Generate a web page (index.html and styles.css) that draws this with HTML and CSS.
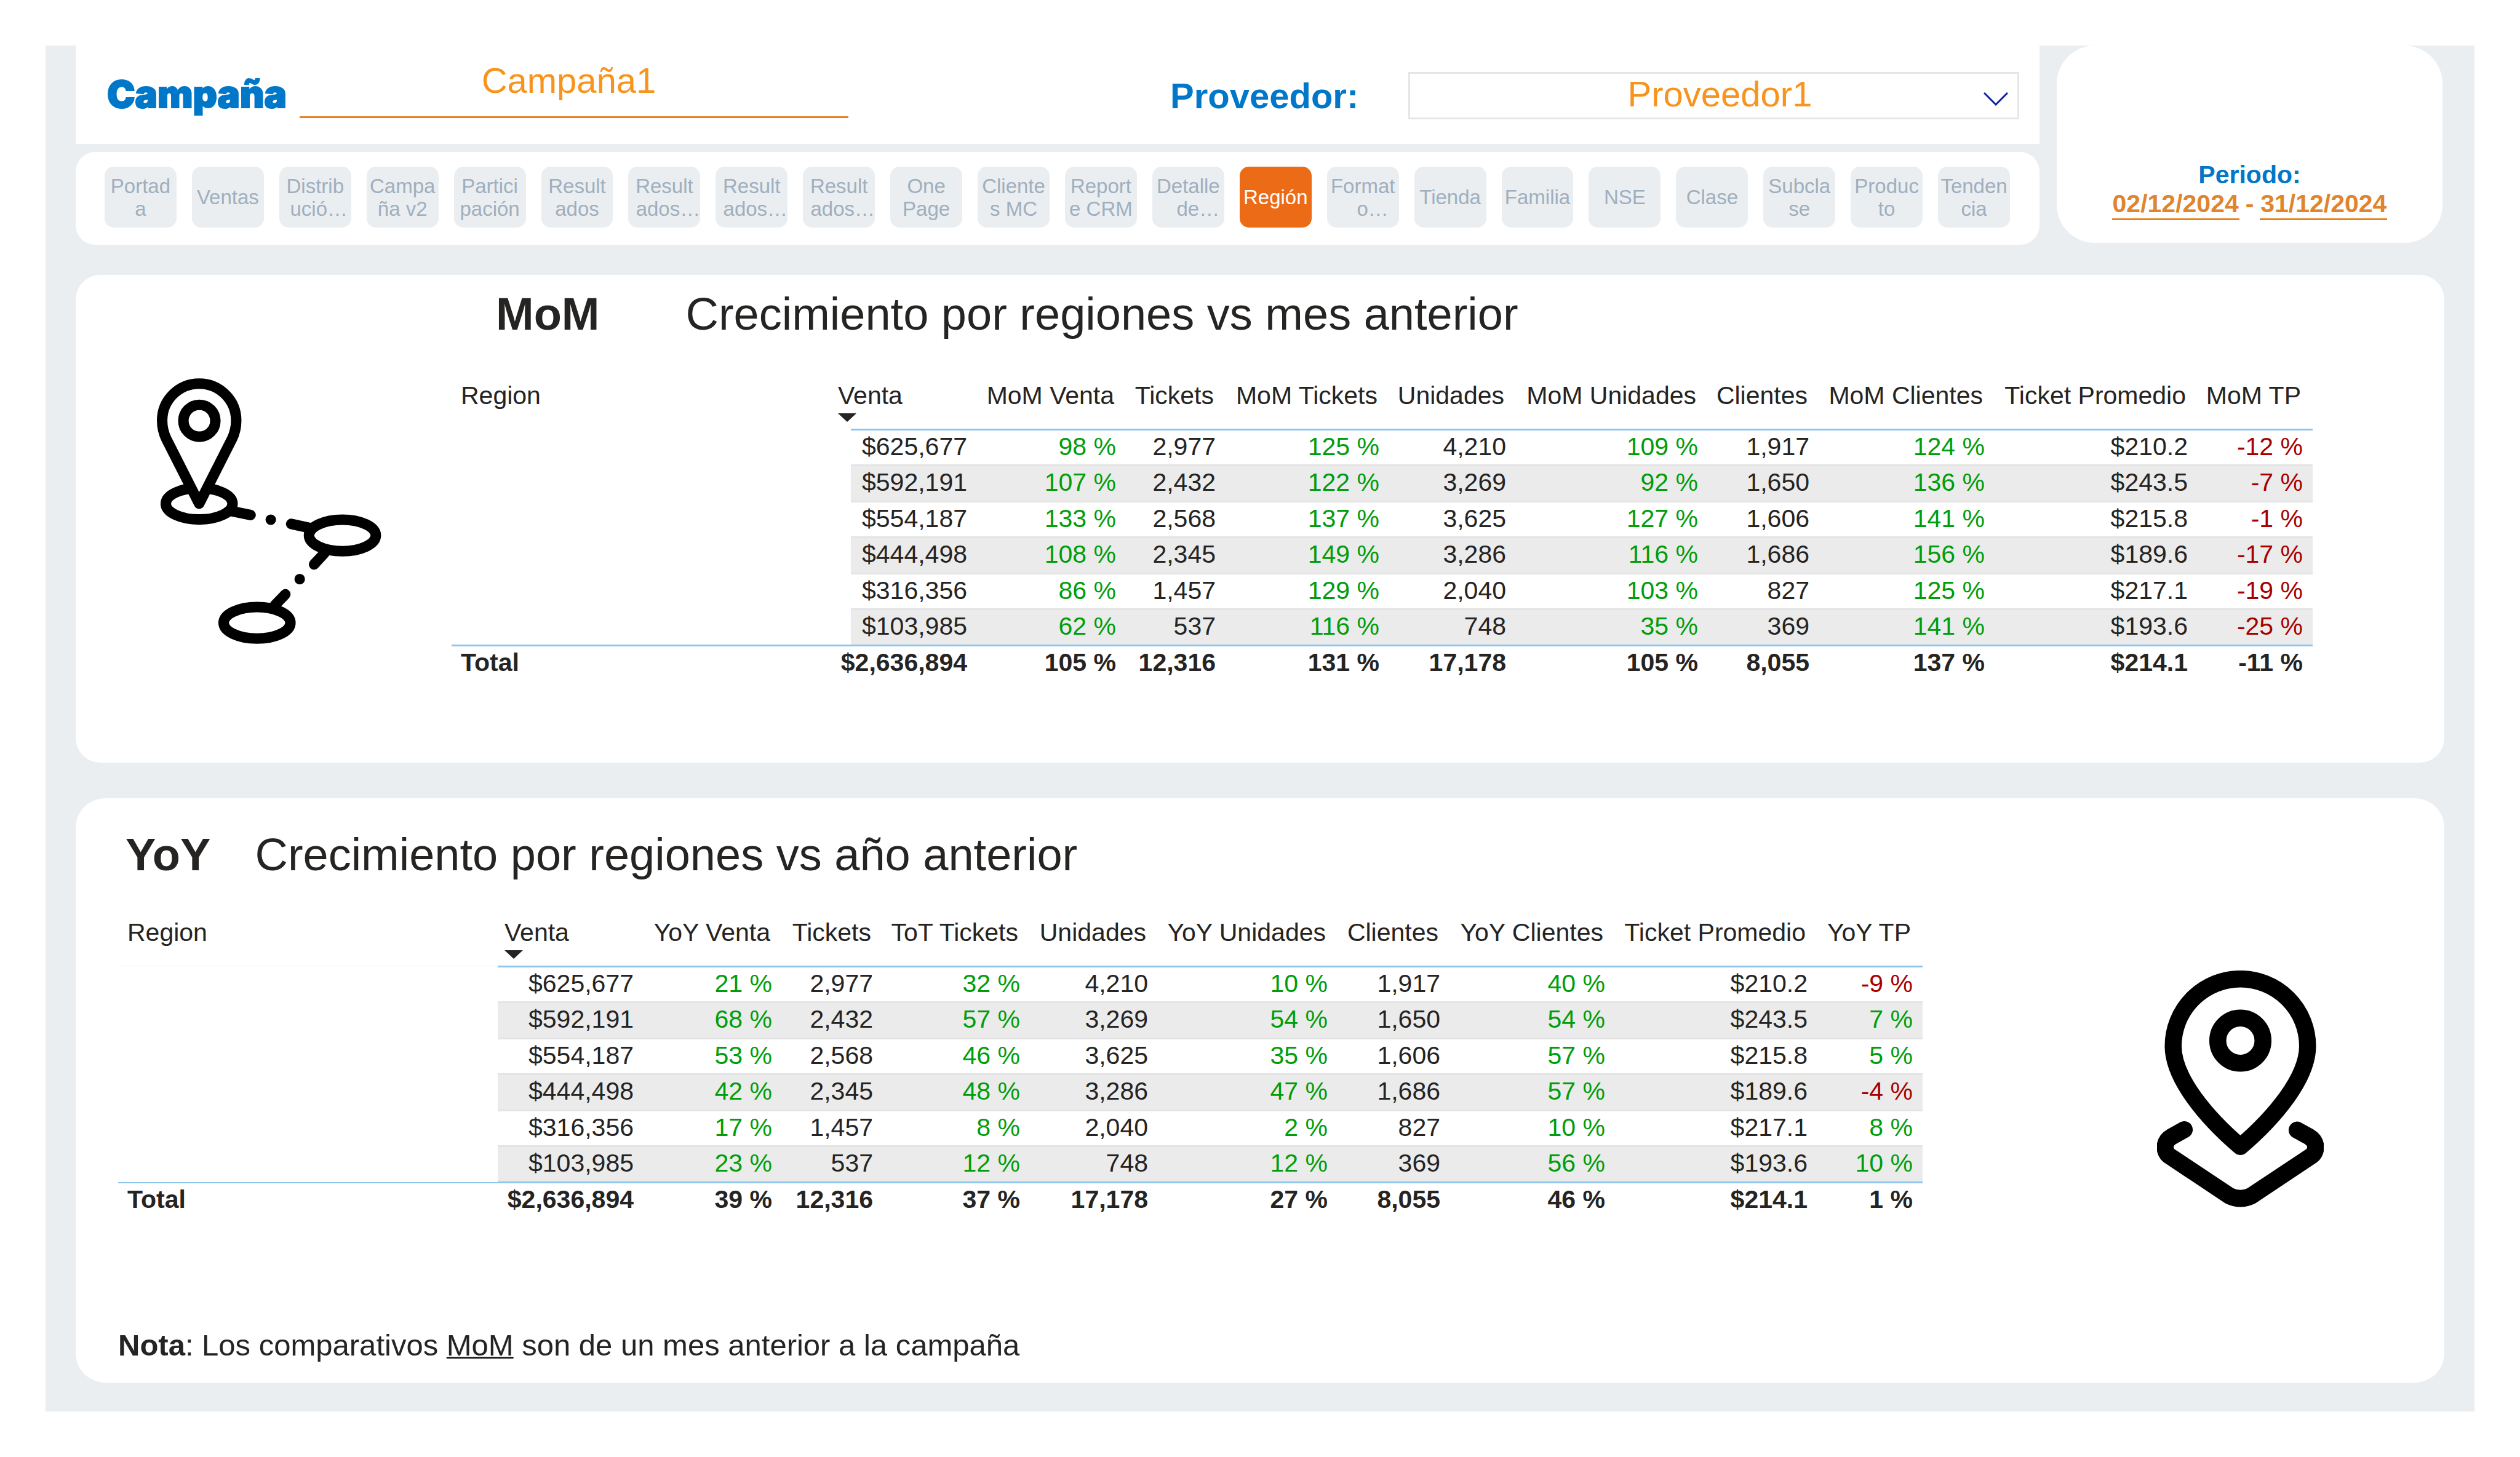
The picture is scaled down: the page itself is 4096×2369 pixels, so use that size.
FILE: index.html
```html
<!DOCTYPE html>
<html lang="es">
<head>
<meta charset="utf-8">
<title>Región</title>
<link rel="stylesheet" href="styles.css">
</head>
<body>
<main class="report">
  <div class="top">
    <div class="top-main">
      <header class="filters">
        <label class="filter-label filter-label-heavy" for="campana">Campaña</label>
        <input class="campaign" id="campana" type="text" value="Campaña1">
        <label class="filter-label provider-label" for="proveedor">Proveedor:</label>
        <div class="provider">
          <select class="provider-select" id="proveedor"><option>Proveedor1</option></select>
          <svg class="chevron" viewBox="0 0 40 22" aria-hidden="true"><path d="M1 1 L20 20 L39 1"/></svg>
        </div>
      </header>
      <nav class="pages">
        <button class="page">Portad<br>a</button>
        <button class="page">Ventas</button>
        <button class="page">Distrib<br><span class="clip">ució…</span></button>
        <button class="page">Campa<br>ña v2</button>
        <button class="page">Partici<br>pación</button>
        <button class="page">Result<br>ados</button>
        <button class="page">Result<br><span class="clip">ados…</span></button>
        <button class="page">Result<br><span class="clip">ados…</span></button>
        <button class="page">Result<br><span class="clip">ados…</span></button>
        <button class="page">One<br>Page</button>
        <button class="page">Cliente<br>s MC</button>
        <button class="page">Report<br>e CRM</button>
        <button class="page">Detalle<br><span class="clip-wide">de…</span></button>
        <button class="page page-active">Región</button>
        <button class="page">Format<br><span class="clip-wide">o…</span></button>
        <button class="page">Tienda</button>
        <button class="page">Familia</button>
        <button class="page">NSE</button>
        <button class="page">Clase</button>
        <button class="page">Subcla<br>se</button>
        <button class="page">Produc<br>to</button>
        <button class="page">Tenden<br>cia</button>
      </nav>
    </div>
    <section class="period">
      <label class="period-label" for="desde">Periodo:</label>
      <div class="period-dates">
        <input class="date" id="desde" type="text" value="02/12/2024">
        <span>-</span>
        <input class="date" type="text" value="31/12/2024" aria-label="Hasta">
      </div>
    </section>
  </div>

  <section class="card card-mom">
    <div class="route-area">
      <svg class="route" viewBox="175 125 1110 1316" aria-hidden="true">
        <g fill="none" stroke="#000" stroke-width="52" stroke-linecap="round" stroke-linejoin="round">
          <ellipse cx="384" cy="748" rx="165" ry="78"/>
          <path fill="#fff" d="M384 748 L222 428 C208 400 201 370 201 337 A183 183 0 0 1 567 337 C567 370 560 400 546 428 Z"/>
          <circle cx="385" cy="338" r="79"/>
          <path d="M545 785 L638 804 M839 848 L930 868 M1003 993 L952 1048 M810 1196 L758 1250"/>
          <ellipse cx="1092" cy="905" rx="165" ry="78"/>
          <ellipse cx="670" cy="1337" rx="165" ry="78"/>
        </g>
        <circle cx="738" cy="827" r="26"/>
        <circle cx="881" cy="1121" r="26"/>
      </svg>
    </div>
    <div class="mom-main">
      <h2 class="title title-mom"><strong>MoM</strong><span>Crecimiento por regiones vs mes anterior</span></h2>
      <table class="data">
        <colgroup>
          <col style="width:617px"><col style="width:32px"><col style="width:205px"><col style="width:242px"><col style="width:162px"><col style="width:266px"><col style="width:206px"><col style="width:312px"><col style="width:181px"><col style="width:285px"><col style="width:330px"><col style="width:187px">
        </colgroup>
        <thead>
          <tr><th class="left">Region</th><th class="left sorted" colspan="2">Venta<svg class="sort" viewBox="0 0 30 14" aria-hidden="true"><path d="M0 0H30L15 14Z"/></svg></th><th>MoM Venta</th><th>Tickets</th><th>MoM Tickets</th><th>Unidades</th><th>MoM Unidades</th><th>Clientes</th><th>MoM Clientes</th><th>Ticket Promedio</th><th>MoM TP</th></tr>
        </thead>
        <tbody>
          <tr><td class="region" colspan="2"></td><td>$625,677</td><td class="up">98 %</td><td>2,977</td><td class="up">125 %</td><td>4,210</td><td class="up">109 %</td><td>1,917</td><td class="up">124 %</td><td>$210.2</td><td class="down">-12 %</td></tr>
          <tr><td class="region" colspan="2"></td><td>$592,191</td><td class="up">107 %</td><td>2,432</td><td class="up">122 %</td><td>3,269</td><td class="up">92 %</td><td>1,650</td><td class="up">136 %</td><td>$243.5</td><td class="down">-7 %</td></tr>
          <tr><td class="region" colspan="2"></td><td>$554,187</td><td class="up">133 %</td><td>2,568</td><td class="up">137 %</td><td>3,625</td><td class="up">127 %</td><td>1,606</td><td class="up">141 %</td><td>$215.8</td><td class="down">-1 %</td></tr>
          <tr><td class="region" colspan="2"></td><td>$444,498</td><td class="up">108 %</td><td>2,345</td><td class="up">149 %</td><td>3,286</td><td class="up">116 %</td><td>1,686</td><td class="up">156 %</td><td>$189.6</td><td class="down">-17 %</td></tr>
          <tr><td class="region" colspan="2"></td><td>$316,356</td><td class="up">86 %</td><td>1,457</td><td class="up">129 %</td><td>2,040</td><td class="up">103 %</td><td>827</td><td class="up">125 %</td><td>$217.1</td><td class="down">-19 %</td></tr>
          <tr><td class="region" colspan="2"></td><td>$103,985</td><td class="up">62 %</td><td>537</td><td class="up">116 %</td><td>748</td><td class="up">35 %</td><td>369</td><td class="up">141 %</td><td>$193.6</td><td class="down">-25 %</td></tr>
        </tbody>
        <tfoot>
          <tr><th class="left">Total</th><td colspan="2">$2,636,894</td><td>105 %</td><td>12,316</td><td>131 %</td><td>17,178</td><td>105 %</td><td>8,055</td><td>137 %</td><td>$214.1</td><td>-11 %</td></tr>
        </tfoot>
      </table>
    </div>
  </section>

  <section class="card card-yoy">
    <div class="yoy-main">
      <h2 class="title title-yoy"><strong>YoY</strong><span>Crecimiento por regiones vs año anterior</span></h2>
      <table class="data">
        <colgroup>
          <col style="width:617px"><col style="width:237px"><col style="width:225px"><col style="width:164px"><col style="width:239px"><col style="width:208px"><col style="width:292px"><col style="width:183px"><col style="width:268px"><col style="width:329px"><col style="width:171px">
        </colgroup>
        <thead>
          <tr><th class="left">Region</th><th class="left sorted">Venta<svg class="sort" viewBox="0 0 30 14" aria-hidden="true"><path d="M0 0H30L15 14Z"/></svg></th><th>YoY Venta</th><th>Tickets</th><th>ToT Tickets</th><th>Unidades</th><th>YoY Unidades</th><th>Clientes</th><th>YoY Clientes</th><th>Ticket Promedio</th><th>YoY TP</th></tr>
        </thead>
        <tbody>
          <tr><td class="region"></td><td>$625,677</td><td class="up">21 %</td><td>2,977</td><td class="up">32 %</td><td>4,210</td><td class="up">10 %</td><td>1,917</td><td class="up">40 %</td><td>$210.2</td><td class="down">-9 %</td></tr>
          <tr><td class="region"></td><td>$592,191</td><td class="up">68 %</td><td>2,432</td><td class="up">57 %</td><td>3,269</td><td class="up">54 %</td><td>1,650</td><td class="up">54 %</td><td>$243.5</td><td class="up">7 %</td></tr>
          <tr><td class="region"></td><td>$554,187</td><td class="up">53 %</td><td>2,568</td><td class="up">46 %</td><td>3,625</td><td class="up">35 %</td><td>1,606</td><td class="up">57 %</td><td>$215.8</td><td class="up">5 %</td></tr>
          <tr><td class="region"></td><td>$444,498</td><td class="up">42 %</td><td>2,345</td><td class="up">48 %</td><td>3,286</td><td class="up">47 %</td><td>1,686</td><td class="up">57 %</td><td>$189.6</td><td class="down">-4 %</td></tr>
          <tr><td class="region"></td><td>$316,356</td><td class="up">17 %</td><td>1,457</td><td class="up">8 %</td><td>2,040</td><td class="up">2 %</td><td>827</td><td class="up">10 %</td><td>$217.1</td><td class="up">8 %</td></tr>
          <tr><td class="region"></td><td>$103,985</td><td class="up">23 %</td><td>537</td><td class="up">12 %</td><td>748</td><td class="up">12 %</td><td>369</td><td class="up">56 %</td><td>$193.6</td><td class="up">10 %</td></tr>
        </tbody>
        <tfoot>
          <tr><th class="left">Total</th><td>$2,636,894</td><td>39 %</td><td>12,316</td><td>37 %</td><td>17,178</td><td>27 %</td><td>8,055</td><td>46 %</td><td>$214.1</td><td>1 %</td></tr>
        </tfoot>
      </table>
      <p class="note"><strong>Nota</strong>: Los comparativos <u>MoM</u> son de un mes anterior a la campaña</p>
    </div>
    <div class="pin-area">
      <svg class="pin" viewBox="157 118 826 1172" aria-hidden="true">
        <g fill="none" stroke="#000" stroke-width="84" stroke-linecap="round" stroke-linejoin="round">
          <path d="M570 990 C400 845 237 650 237 492 A333 333 0 0 1 903 492 C903 650 740 845 570 990 Z"/>
          <circle cx="570" cy="465" r="112"/>
          <path d="M292 906 L228 942 C189 965 189 1013 217 1035 L514 1233 Q542 1247 570 1247 Q598 1247 626 1233 L923 1035 C951 1013 951 965 912 942 L851 908"/>
        </g>
      </svg>
    </div>
  </section>
</main>
</body>
</html>
```
FILE: styles.css
```css
* {
  box-sizing: border-box;
}

body {
  margin: 0;
  padding: 74px;
  background: #fff;
  color: #252423;
  font-family: "Liberation Sans", Arial, sans-serif;
  font-size: 41px;
}

button,
input,
select {
  margin: 0;
  padding: 0;
  border: 0;
  border-radius: 0;
  background: none;
  font-family: inherit;
}

.report {
  padding: 0 49px 47px;
  background: #eaeef1;
}

.top {
  display: flex;
  align-items: flex-start;
  gap: 28px;
  padding-right: 3px;
}

.top-main {
  flex: 1;
  min-width: 0;
}

/* Filter bar */
.filters {
  display: grid;
  grid-template-columns: 316px 892fr 523fr 387px 993fr;
  align-items: center;
  min-height: 160px;
  padding: 3px 33px 0 48px;
  background: #fff;
}

.filter-label {
  color: #0077c8;
  font-size: 58px;
  font-weight: 700;
  line-height: 64px;
}

.filter-label-heavy {
  padding: 0 0 6px 3px;
  font-family: "Arial Black", Inter, sans-serif;
  font-size: 61px;
  font-weight: 900;
  -webkit-text-stroke: 2px #0077c8;
}

.campaign {
  align-self: start;
  width: 100%;
  height: 98px;
  margin-top: 17px;
  padding: 0 17px 23px 0;
  border-bottom: 3px solid #e8821e;
  color: #f7941d;
  font-size: 58px;
  text-align: center;
}

.provider-label {
  grid-column: 4;
}

.provider {
  position: relative;
}

.provider-select {
  display: block;
  width: 100%;
  height: 77px;
  padding: 0 0 12px 20px;
  border: 3px solid #e6e6e6;
  appearance: none;
  color: #f7941d;
  font-size: 58px;
  text-align-last: center;
}

.chevron {
  position: absolute;
  top: 33px;
  right: 18px;
  width: 40px;
  height: 22px;
  fill: none;
  stroke: #12239e;
  stroke-width: 3px;
  pointer-events: none;
}

/* Page navigator */
.pages {
  display: grid;
  grid-template-columns: repeat(22, minmax(0, 1fr));
  gap: 25px;
  margin-top: 13px;
  padding: 24px 48px 28px 47px;
  border-radius: 32px;
  background: #fff;
}

.page {
  height: 99px;
  border-radius: 15px;
  background: #eaeef1;
  color: #a0afbe;
  font-size: 33px;
  line-height: 37px;
  white-space: nowrap;
}

.page-active {
  background: #eb6b17;
  color: #fff;
}

.clip {
  padding-left: 12px;
}

.clip-wide {
  padding-left: 32px;
}

/* Period */
.period {
  width: 627px;
  padding: 187px 0 37px;
  border-radius: 62px;
  background: #fff;
  font-weight: 700;
  line-height: 47px;
  text-align: center;
}

.period-label {
  display: block;
  color: #0077c8;
}

.period-dates {
  display: flex;
  justify-content: center;
  gap: 10px;
  color: #e0842d;
}

.date {
  width: 207px;
  height: 50px;
  border-bottom: 3px solid #e8821e;
  color: inherit;
  font-size: 41px;
  font-weight: 700;
  line-height: 47px;
  text-align: center;
}

/* Cards */
.card {
  display: flex;
  background: #fff;
}

.card-mom {
  margin-top: 49px;
  padding: 19px 214px 134px 0;
  border-radius: 40px;
}

.card-yoy {
  margin-top: 58px;
  padding: 47px 0 31px 69px;
  border-radius: 48px;
}

.route-area {
  flex: 0 0 611px;
  padding: 148px 0 0 132px;
}

.route {
  display: block;
  width: 365px;
  height: 433px;
}

.pin-area {
  flex: 0 0 848px;
  padding: 233px 0 0 381px;
}

.pin {
  display: block;
  width: 271px;
  height: 385px;
}

.mom-main,
.yoy-main {
  flex: 1;
  min-width: 0;
}

.title {
  display: flex;
  margin: 0;
  font-size: 74px;
  font-weight: 400;
  line-height: 90px;
  white-space: nowrap;
}

.title-mom {
  gap: 140px;
  margin-bottom: 61px;
  padding-left: 72px;
}

.title-yoy {
  gap: 72px;
  margin-bottom: 55px;
  padding-left: 12px;
}

.note {
  margin: 178px 0 0;
  font-size: 49px;
  line-height: 60px;
}

.note u {
  text-decoration-thickness: 3px;
}

/* Data tables */
.data {
  width: 100%;
  border-spacing: 0;
  table-layout: fixed;
  line-height: 52px;
  text-align: right;
  white-space: nowrap;
}

.data th,
.data td {
  padding: 0 16px 0 0;
  vertical-align: top;
}

.data thead th {
  height: 80px;
  padding-right: 19px;
  font-weight: 400;
  text-align: right;
}

.data .left {
  padding-left: 15px;
  text-align: left;
}

.data thead .sorted {
  padding-left: 11px;
}

.sort {
  display: block;
  width: 30px;
  height: 14px;
  margin-top: 3px;
  fill: #252423;
}

.data tbody td {
  height: 58px;
  border-bottom: 3px solid #e4e4e4;
}

.data tbody tr:nth-child(even) td {
  height: 59px;
  background: #ebebeb;
}

.data tbody tr:first-child td {
  height: 61px;
  border-top: 3px solid #90c5ee;
}

.data tbody tr:last-child td {
  border-bottom-color: #90c5ee;
}

.data tbody tr .region,
.data tbody tr:nth-child(even) .region {
  border-color: transparent;
  background: none;
}

.data tbody tr:first-child .region {
  border-top-color: transparent;
}

.data tbody tr:last-child .region {
  border-bottom-color: #90c5ee;
}

.card-yoy .data tbody tr:first-child .region {
  border-top: 1px solid #eef4f8;
}

.card-yoy .data tbody tr:last-child .region {
  border-bottom-width: 2px;
}

.data tfoot th,
.data tfoot td {
  height: 55px;
  font-weight: 700;
}

.up {
  color: #009e0b;
}

.down {
  color: #a80000;
}
```
